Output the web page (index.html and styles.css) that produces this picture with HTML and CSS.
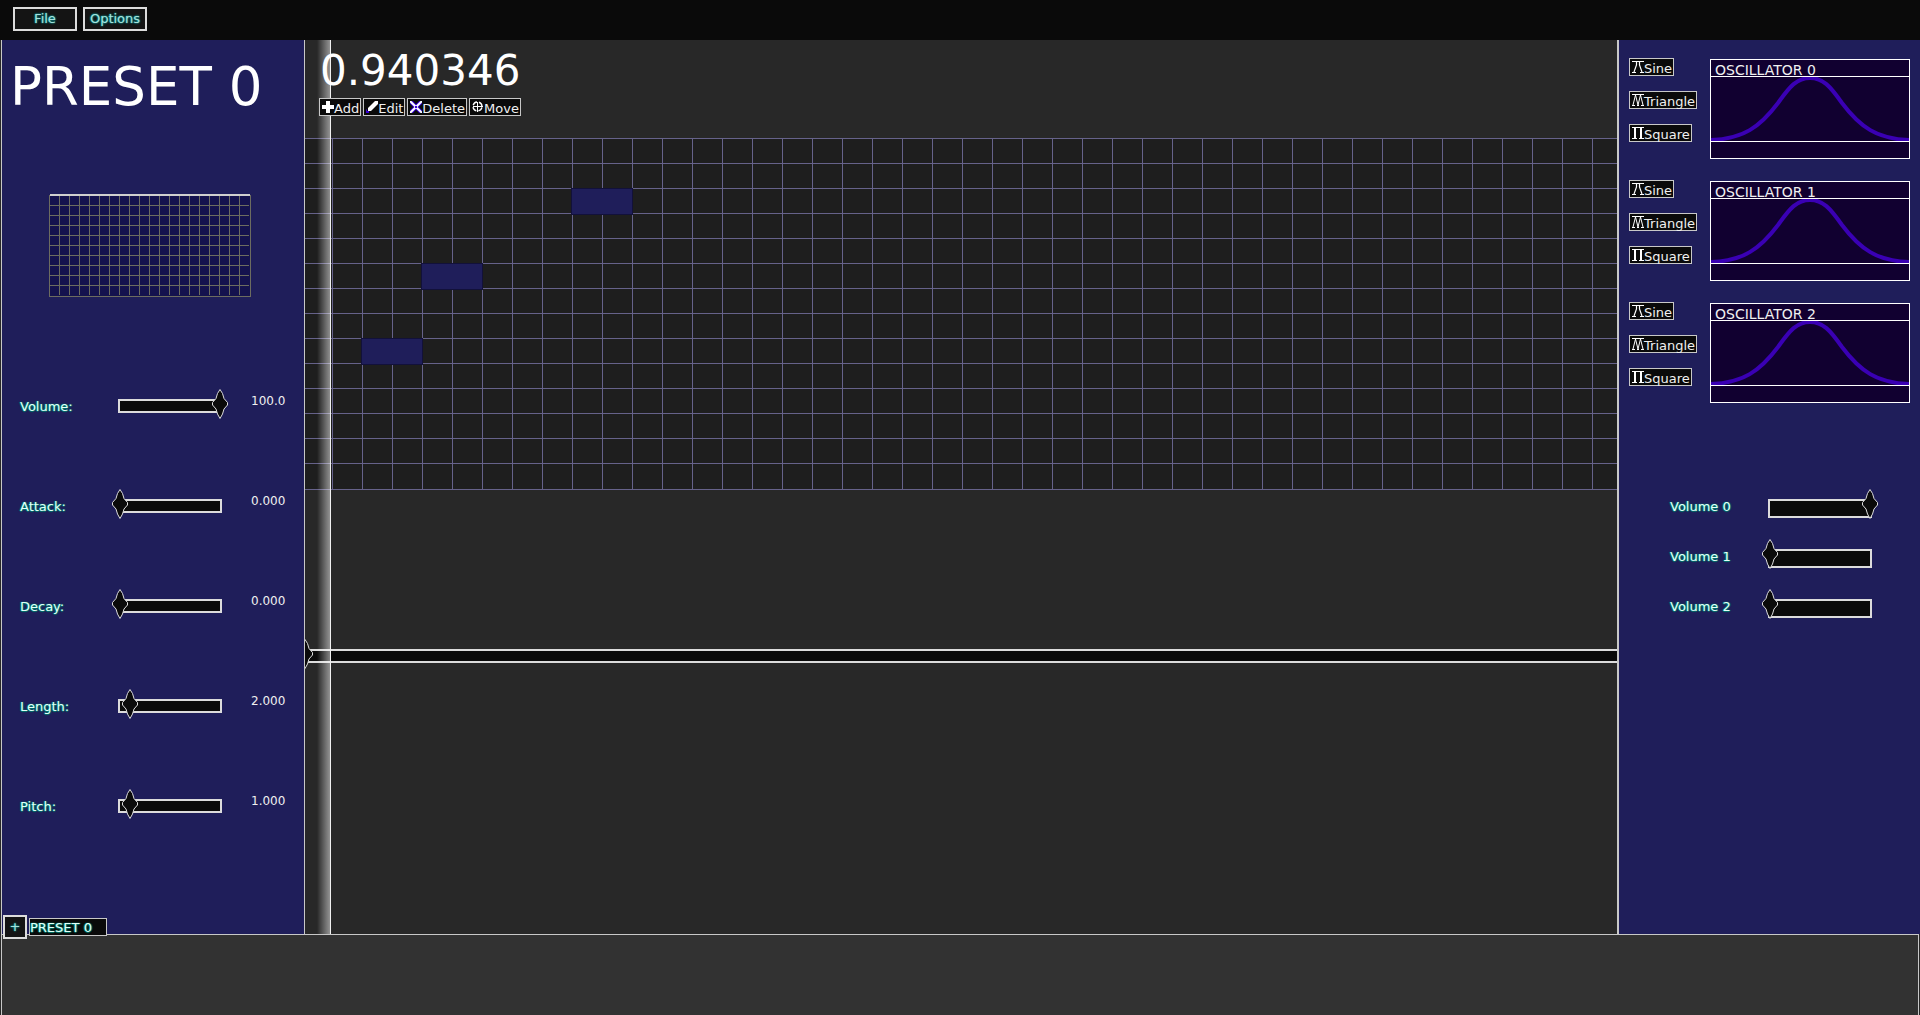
FILE: index.html
```
<!DOCTYPE html>
<html lang="en">
<head>
<meta charset="utf-8">
<title>Synth</title>
<link rel="stylesheet" href="styles.css">
</head>
<body>
<svg class="defs" aria-hidden="true">
  <symbol id="i-add" viewBox="0 0 12 12"><path d="M4 0h4v4h4v4H8v4H4V8H0V4h4z" fill="#fff"/></symbol>
  <symbol id="i-edit" viewBox="0 0 12 12"><path d="M9 0h3v3L5 10H2V7z" fill="#fff"/><path d="M1 8v2h2v2H0V9z" fill="#3a00d8"/></symbol>
  <symbol id="i-delete" viewBox="0 0 12 12"><path d="M1 1l10 10M11 1L1 11" stroke="#3a00d8" stroke-width="4"/><path d="M0 0l12 12M12 0L0 12" stroke="#fff" stroke-width="2"/><path d="M5 5h2v2H5z" fill="#3a00d8"/></symbol>
  <symbol id="i-move" viewBox="0 0 12 12"><path d="M5.500 1v10M1 5.500h10" stroke="#fff"/><circle cx="5.500" cy="5.500" r="4.500" stroke="#fff" stroke-width="1.400" stroke-dasharray="5 2.070" stroke-dashoffset="-1" fill="none"/></symbol>
  <symbol id="i-sine" viewBox="0 0 12 12"><path d="M0 0h12v1H0zM0 11h4v1H0zM8 11h4v1H8z" fill="#fff"/><path d="M2 11L4.500 4V1M10 11L7.500 4V1" stroke="#fff" stroke-width="1.200" fill="none"/></symbol>
  <symbol id="i-triangle" viewBox="0 0 12 12"><path d="M0 0h12v1H0zM0 11h3v1H0zM5 11h2v1H5zM9 11h3v1H9z" fill="#fff"/><path d="M1 11L3.500 1L6 11L8.500 1L11 11" stroke="#fff" fill="none"/></symbol>
  <symbol id="i-square" viewBox="0 0 12 12"><path d="M0 0h12v1H0zM0 11h5v1H0zM7 11h5v1H7zM2 1h2v10H2zM8 1h2v10H8z" fill="#fff"/></symbol>
  <symbol id="bell" viewBox="0 0 198 64"><path d="M0 63C32 62 49 50 67 26C79 9 86 1 99 1S119 9 131 26C149 50 166 62 198 63" fill="none" stroke="#3a00b4" stroke-width="4"/></symbol>
</svg>

<header class="menubar">
  <button class="glow-button">File</button>
  <button class="glow-button">Options</button>
</header>

<main class="workspace">
  <section class="preset">
    <h1 class="preset-name">PRESET 0</h1>
    <svg class="envelope" viewBox="0 0 202 104" role="img" aria-label="Envelope">
      <defs><pattern id="cells" width="10" height="10" patternUnits="userSpaceOnUse" x="0" y="1"><path d="M.5 0v10M0 .5h10" stroke="#6c6c60"/></pattern></defs>
      <path d="M0 1h202v102H0z" fill="#14124e"/>
      <path d="M0 1h200v100H0z" fill="url(#cells)"/>
      <path d="M201.500 1v102M0 102.500h202M.5 101v2" stroke="#6c6c60"/>
      <path d="M1 1h200" stroke="#cfcfcf" stroke-width="2"/>
    </svg>
    <div class="controls">
      <div class="control"><label class="glow" for="volume">Volume:</label><input class="slider" id="volume" type="range" min="0" max="100" value="100"><output class="value" for="volume">100.0</output></div>
      <div class="control"><label class="glow" for="attack">Attack:</label><input class="slider" id="attack" type="range" min="0" max="100" value="0"><output class="value" for="attack">0.000</output></div>
      <div class="control"><label class="glow" for="decay">Decay:</label><input class="slider" id="decay" type="range" min="0" max="100" value="0"><output class="value" for="decay">0.000</output></div>
      <div class="control"><label class="glow" for="length">Length:</label><input class="slider" id="length" type="range" min="0" max="20" value="2"><output class="value" for="length">2.000</output></div>
      <div class="control"><label class="glow" for="pitch">Pitch:</label><input class="slider" id="pitch" type="range" min="0" max="10" value="1"><output class="value" for="pitch">1.000</output></div>
    </div>
  </section>

  <section class="editor">
    <div class="editor-head">
      <output class="time">0.940346</output>
      <div class="tools">
        <button class="tool"><svg class="icon"><use href="#i-add"/></svg>Add</button>
        <button class="tool"><svg class="icon"><use href="#i-edit"/></svg>Edit</button>
        <button class="tool"><svg class="icon"><use href="#i-delete"/></svg>Delete</button>
        <button class="tool"><svg class="icon"><use href="#i-move"/></svg>Move</button>
      </div>
    </div>
    <div class="roll">
      <div class="note" style="left:266px;top:50px"></div>
      <div class="note" style="left:116px;top:125px"></div>
      <div class="note" style="left:56px;top:200px"></div>
    </div>
    <input class="slider scroll" type="range" min="0" max="100" value="0" aria-label="Scroll">
    <div class="playhead"></div>
  </section>

  <section class="oscillators">
    <div class="oscillator">
      <div class="waves">
        <button class="tool"><svg class="icon"><use href="#i-sine"/></svg>Sine</button>
        <button class="tool"><svg class="icon"><use href="#i-triangle"/></svg>Triangle</button>
        <button class="tool"><svg class="icon"><use href="#i-square"/></svg>Square</button>
      </div>
      <div class="scope"><h2 class="scope-title">OSCILLATOR 0</h2><svg class="scope-plot"><use href="#bell"/></svg></div>
    </div>
    <div class="oscillator">
      <div class="waves">
        <button class="tool"><svg class="icon"><use href="#i-sine"/></svg>Sine</button>
        <button class="tool"><svg class="icon"><use href="#i-triangle"/></svg>Triangle</button>
        <button class="tool"><svg class="icon"><use href="#i-square"/></svg>Square</button>
      </div>
      <div class="scope"><h2 class="scope-title">OSCILLATOR 1</h2><svg class="scope-plot"><use href="#bell"/></svg></div>
    </div>
    <div class="oscillator">
      <div class="waves">
        <button class="tool"><svg class="icon"><use href="#i-sine"/></svg>Sine</button>
        <button class="tool"><svg class="icon"><use href="#i-triangle"/></svg>Triangle</button>
        <button class="tool"><svg class="icon"><use href="#i-square"/></svg>Square</button>
      </div>
      <div class="scope"><h2 class="scope-title">OSCILLATOR 2</h2><svg class="scope-plot"><use href="#bell"/></svg></div>
    </div>
    <div class="mix">
      <div class="mix-row"><label class="glow" for="v0">Volume 0</label><input class="slider tall" id="v0" type="range" min="0" max="100" value="100"></div>
      <div class="mix-row"><label class="glow" for="v1">Volume 1</label><input class="slider tall" id="v1" type="range" min="0" max="100" value="0"></div>
      <div class="mix-row"><label class="glow" for="v2">Volume 2</label><input class="slider tall" id="v2" type="range" min="0" max="100" value="0"></div>
    </div>
  </section>
</main>

<footer class="timeline">
  <div class="tabs">
    <button class="glow-button add-preset" aria-label="Add preset">+</button>
    <button class="tab glow">PRESET 0</button>
  </div>
</footer>
</body>
</html>
```
FILE: styles.css
```
* { box-sizing: border-box; }

body {
  margin: 0;
  min-height: 100vh;
  display: flex;
  flex-direction: column;
  background: #282828;
  color: #fff;
  font: 13px/16px "DejaVu Sans", sans-serif;
}

button { font: inherit; color: inherit; margin: 0; cursor: pointer; white-space: nowrap; }
h1, h2 { margin: 0; font-weight: normal; }
.defs { position: absolute; width: 0; height: 0; }

.glow {
  color: #e4fffa;
  text-shadow: 0 0 1px #00897b, 1px 0 1px #00796b, -1px 0 1px #00796b, 0 1px 1px #00796b;
}

.menubar {
  display: flex;
  gap: 6px;
  height: 40px;
  padding: 7px 13px;
  background: #0a0a0a;
}

.glow-button {
  width: 64px;
  height: 24px;
  padding: 0;
  border: 2px solid #dcdcdc;
  background: #141414;
  color: #a8e0dc;
  text-shadow: 0 0 2px #0c8c8c, 0 0 2px #0c8c8c, 0 0 1px #0c8c8c;
}

.workspace { flex: 1; display: flex; }

/* Preset column */
.preset {
  width: 304px;
  margin-left: 1px;
  border: solid #c8c8c8;
  border-width: 0 1px;
  background: #1f1e5a;
}
.preset-name { padding: 17px 0 0 8px; font-size: 53px; line-height: 60px; }
.envelope { display: block; width: 202px; height: 104px; margin: 77px 0 0 47px; }

.controls { display: grid; row-gap: 70px; margin-top: 91px; padding-left: 18px; }
.control { display: grid; grid-template-columns: 92px 116px 1fr; height: 30px; }
.control label { padding-top: 10px; }
.control .value { padding: 4px 0 0 23px; font-size: 12px; color: #f0f0f0; }

/* Sliders: the groove is inset 6px at each end so the thumb can overhang it */
.slider {
  --groove: 14px;
  appearance: none;
  width: 116px;
  height: 30px;
  margin: 0;
  background:
    linear-gradient(#0a0a0a, #0a0a0a) 8px 12px / calc(100% - 16px) calc(var(--groove) - 4px) no-repeat,
    linear-gradient(#dcdcdc, #dcdcdc) 6px 10px / calc(100% - 12px) var(--groove) no-repeat;
}
.slider.tall { --groove: 19px; }
.slider::-webkit-slider-thumb {
  appearance: none;
  width: 16px;
  height: 30px;
  background: url("data:image/svg+xml,%3Csvg xmlns='http://www.w3.org/2000/svg' width='16' height='30'%3E%3Cpath d='M8 .5L10.500 4.500L12 9.500L15.500 13.500V16L12 20L10.500 25L8 29.500L5.500 25L4 20L.5 16V13.500L4 9.500L5.500 4.500Z' fill='%230a0a0a' stroke='%23dcdcdc'/%3E%3C/svg%3E") no-repeat;
}

/* Note editor */
.editor { flex: 1; min-width: 0; position: relative; overflow: hidden; }
.editor-head { position: relative; z-index: 1; height: 98px; padding: 6px 0 0 14px; }
.time { display: block; padding-left: 1px; font-size: 42px; line-height: 50px; }
.tools { display: flex; gap: 2px; margin-top: 2px; }

.tool {
  display: flex;
  align-items: flex-start;
  height: 18px;
  padding: 0 1px 0 2px;
  border: 1px solid #c8c8c8;
  background: #0a0a0a;
  color: #f0f0f0;
  line-height: 20px;
}
.icon { flex: none; width: 12px; height: 12px; margin-top: 2px; }

.roll {
  position: relative;
  height: 352px;
  border-bottom: 1px solid #66628a;
  background:
    repeating-linear-gradient(to right, #66628a 0 1px, transparent 1px 30px) 27px 0 / 100% 100% no-repeat,
    repeating-linear-gradient(#66628a 0 1px, transparent 1px 25px) 0 0 / 100% 350px no-repeat,
    #1e1e1e;
}
.note { position: absolute; width: 62px; height: 27px; border: 1px solid #12113a; background: #1f1e5a; }

.scroll { display: block; width: calc(100% + 16px); margin: 149px -8px 0; }
.playhead {
  position: absolute;
  top: 0;
  bottom: 0;
  left: 12px;
  width: 14px;
  border-right: 1px solid #f0f0f0;
  background: linear-gradient(to right, #ffffff00, #ffffff80);
}

/* Oscillator column */
.oscillators {
  width: 303px;
  padding: 18px 10px 0 10px;
  border-left: 2px solid #c8c8c8;
  background: #1f1e5a;
}
.oscillator { display: flex; justify-content: space-between; height: 122px; }
.waves { display: flex; flex-direction: column; align-items: flex-start; gap: 15px; }
.scope { width: 200px; height: 100px; margin-top: 1px; border: 1px solid #fff; background: #110030; }
.scope-title { height: 17px; padding-left: 4px; border-bottom: 1px solid #fff; font-size: 14px; line-height: 20px; color: #f0f0f0; }
.scope-plot { display: block; width: 100%; height: 65px; border-bottom: 1px solid #fff; }

.mix { display: grid; row-gap: 20px; margin-top: 65px; padding-left: 41px; }
.mix-row { display: grid; grid-template-columns: 92px 116px; height: 30px; }
.mix-row label { padding-top: 10px; }

/* Timeline strip with the preset tabs sitting on its top edge */
.timeline {
  height: 81px;
  margin: 0 1px;
  border: solid #c8c8c8;
  border-width: 1px 1px 0;
  background: #323232;
}
.tabs { display: flex; align-items: center; gap: 2px; margin: -20px 0 0 1px; position: relative; }
.add-preset { width: 24px; }
.tab { width: 78px; height: 18px; padding: 0; border: 1px solid #c8c8c8; background: #0a0a0a; text-align: left; line-height: 18px; }
```
